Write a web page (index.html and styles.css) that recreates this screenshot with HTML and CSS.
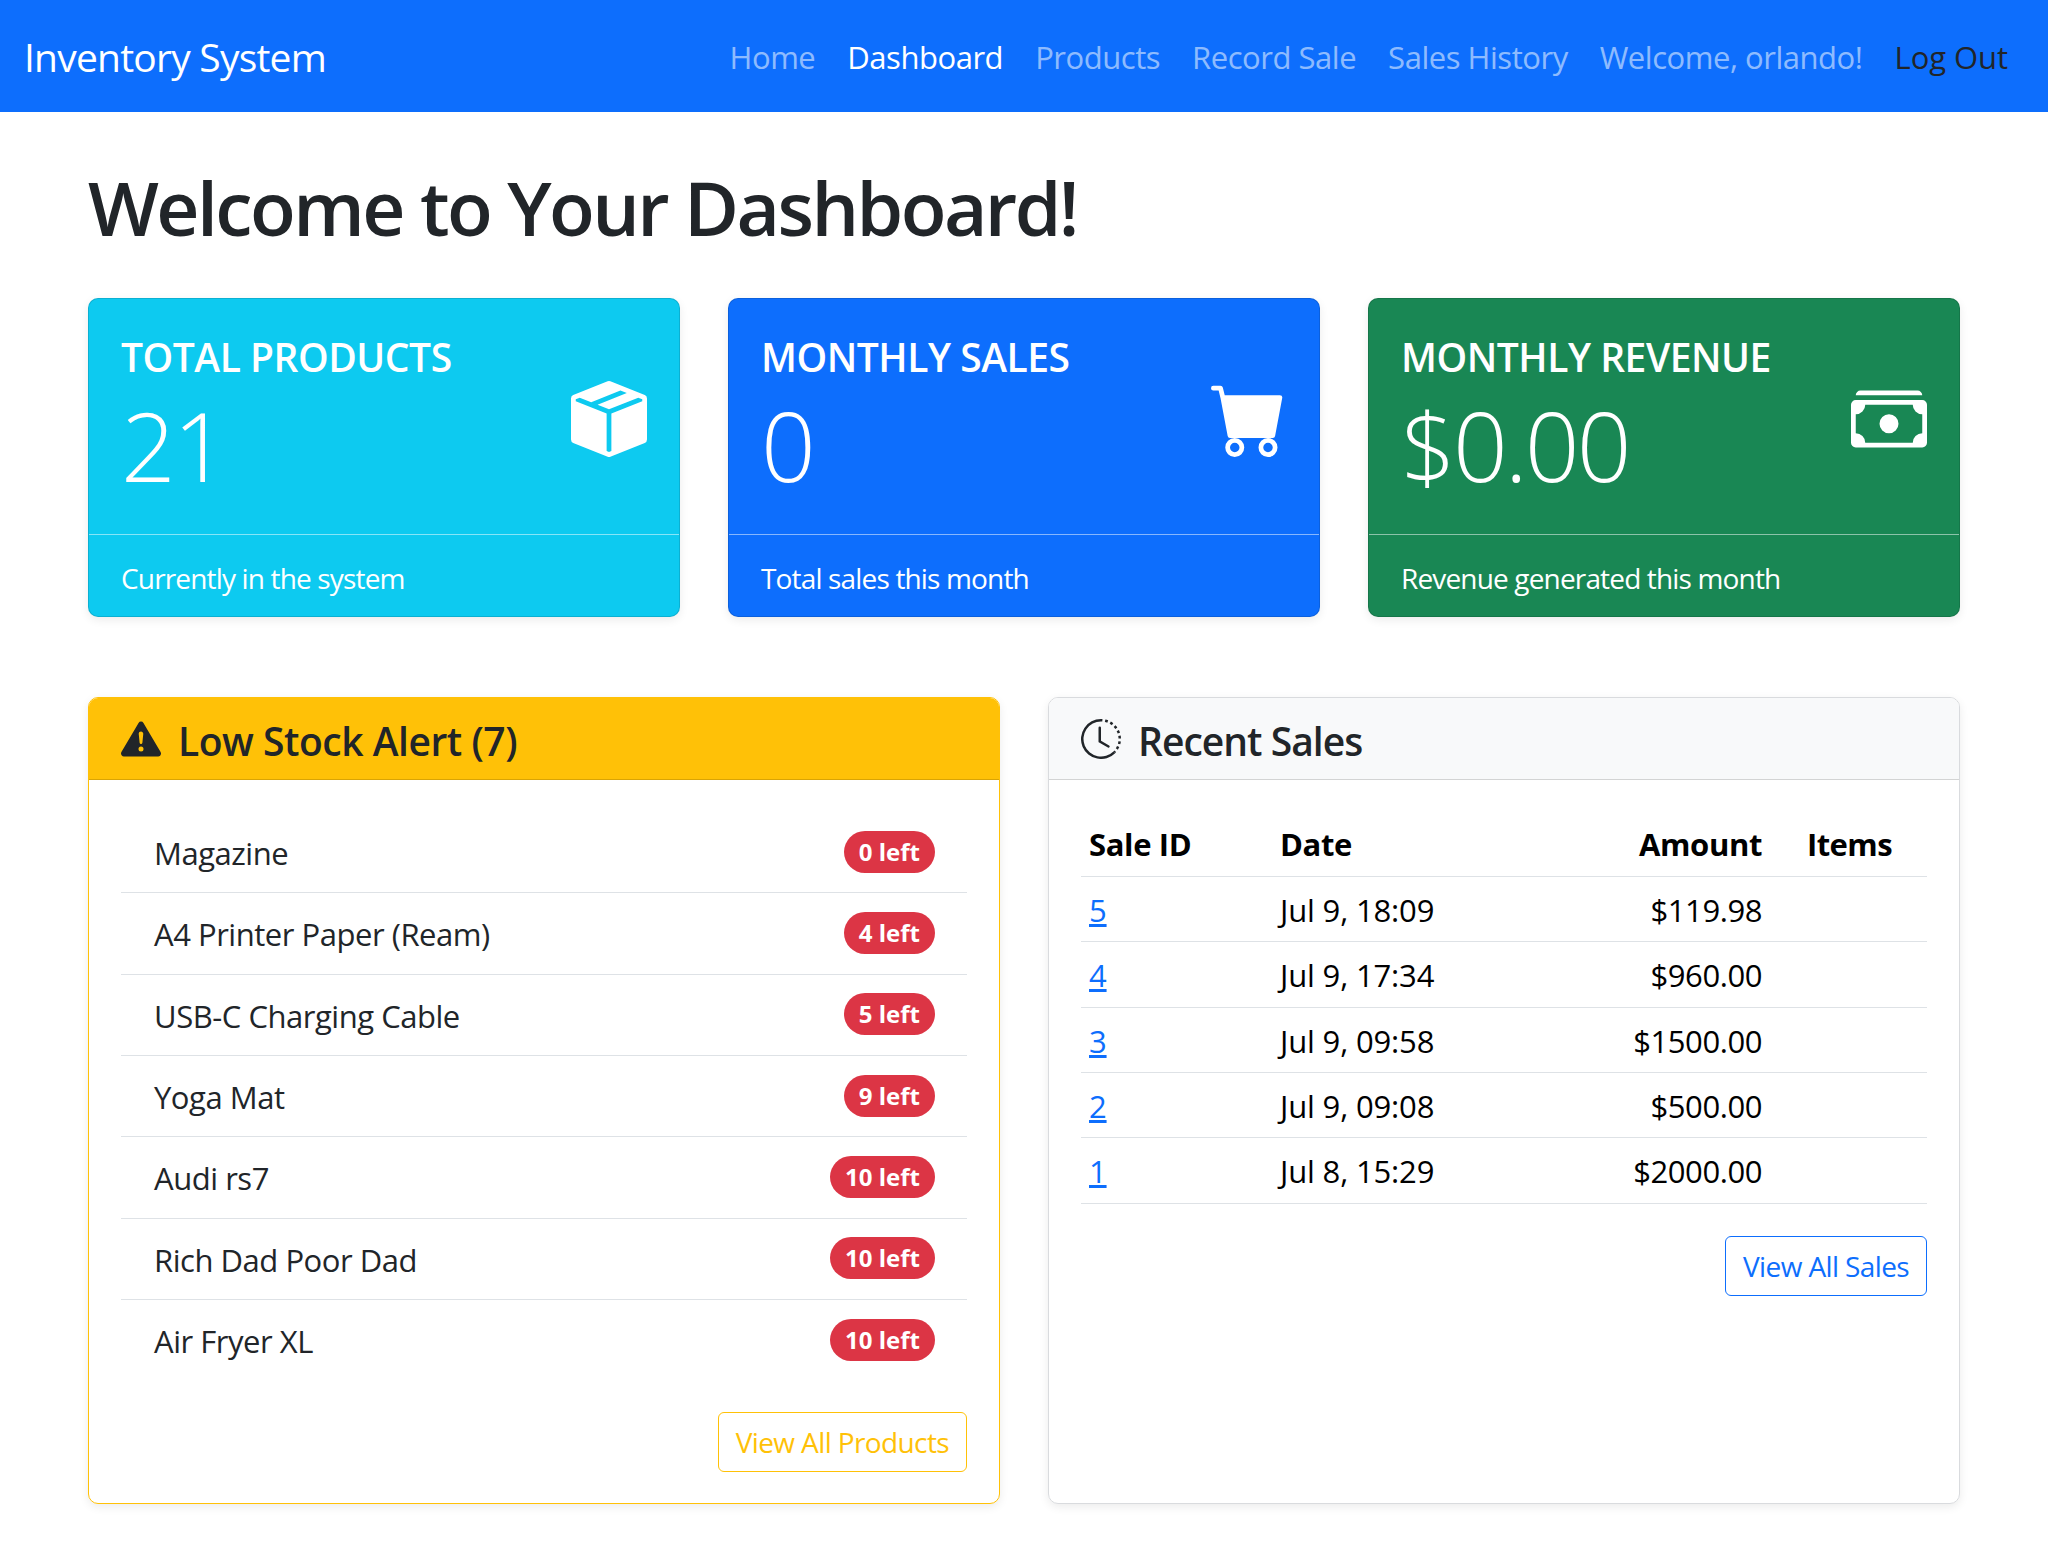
FILE: index.html
```html
<!DOCTYPE html>
<html lang="en">
<head>
<meta charset="utf-8">
<title>Dashboard - Inventory System</title>
<link rel="stylesheet" href="styles.css">
</head>
<body>
<nav class="navbar">
  <a class="brand" href="#">Inventory System</a>
  <ul class="nav">
    <li><a href="#">Home</a></li>
    <li><a class="active" href="#">Dashboard</a></li>
    <li><a href="#">Products</a></li>
    <li><a href="#">Record Sale</a></li>
    <li><a href="#">Sales History</a></li>
    <li><a href="#">Welcome, orlando!</a></li>
    <li><a class="logout" href="#">Log Out</a></li>
  </ul>
</nav>
<main class="container">
  <h1>Welcome to Your Dashboard!</h1>
  <section class="stats">
    <article class="stat stat-info">
      <div class="stat-body">
        <div>
          <h2 class="stat-title">TOTAL PRODUCTS</h2>
          <p class="stat-value">21</p>
        </div>
        <svg class="stat-icon" viewBox="0 0 16 16" fill="currentColor"><path d="M15.528 2.973a.75.75 0 0 1 .472.696v8.662a.75.75 0 0 1-.472.696l-7.25 2.9a.75.75 0 0 1-.557 0l-7.25-2.9A.75.75 0 0 1 0 12.331V3.669a.75.75 0 0 1 .471-.696L7.443.184l.01-.003.268-.108a.75.75 0 0 1 .558 0l.269.108.01.003zM10.404 2 4.25 4.461 1.846 3.5 1 3.839v.4l6.5 2.6v7.922l.5.2.5-.2V6.84l6.5-2.6v-.4l-.846-.339L8 5.961 5.596 5l6.154-2.461z"/></svg>
      </div>
      <div class="stat-foot">Currently in the system</div>
    </article>
    <article class="stat stat-primary">
      <div class="stat-body">
        <div>
          <h2 class="stat-title">MONTHLY SALES</h2>
          <p class="stat-value">0</p>
        </div>
        <svg class="stat-icon" viewBox="0 0 16 16" fill="currentColor"><path d="M0 1.5A.5.5 0 0 1 .5 1H2a.5.5 0 0 1 .485.379L2.89 3H14.5a.5.5 0 0 1 .491.592l-1.5 8A.5.5 0 0 1 13 12H4a.5.5 0 0 1-.491-.408L2.01 3.607 1.61 2H.5a.5.5 0 0 1-.5-.5M5 12a2 2 0 1 0 0 4 2 2 0 0 0 0-4m7 0a2 2 0 1 0 0 4 2 2 0 0 0 0-4m-7 1a1 1 0 1 1 0 2 1 1 0 0 1 0-2m7 0a1 1 0 1 1 0 2 1 1 0 0 1 0-2"/></svg>
      </div>
      <div class="stat-foot">Total sales this month</div>
    </article>
    <article class="stat stat-success">
      <div class="stat-body">
        <div>
          <h2 class="stat-title">MONTHLY REVENUE</h2>
          <p class="stat-value">$0.00</p>
        </div>
        <svg class="stat-icon" viewBox="0 0 16 16" fill="currentColor"><path d="M1 3a1 1 0 0 1 1-1h12a1 1 0 0 1 1 1zm7 8a2 2 0 1 0 0-4 2 2 0 0 0 0 4"/><path d="M0 5a1 1 0 0 1 1-1h14a1 1 0 0 1 1 1v8a1 1 0 0 1-1 1H1a1 1 0 0 1-1-1zm3 0a2 2 0 0 1-2 2v4a2 2 0 0 1 2 2h10a2 2 0 0 1 2-2V7a2 2 0 0 1-2-2z"/></svg>
      </div>
      <div class="stat-foot">Revenue generated this month</div>
    </article>
  </section>
  <section class="panels">
    <article class="panel panel-warning">
      <header class="panel-head head-warning">
        <svg class="head-icon" viewBox="0 0 16 16" fill="currentColor"><path d="M8.982 1.566a1.13 1.13 0 0 0-1.96 0L.165 13.233c-.457.778.091 1.767.98 1.767h13.713c.889 0 1.438-.99.98-1.767L8.982 1.566zM8 5c.535 0 .954.462.9.995l-.35 3.507a.552.552 0 0 1-1.1 0L7.1 5.995A.905.905 0 0 1 8 5zm.002 6a1 1 0 1 1 0 2 1 1 0 0 1 0-2z"/></svg>
        <h3 class="title-alert">Low Stock Alert (7)</h3>
      </header>
      <div class="panel-body">
        <ul class="stock">
          <li><span>Magazine</span><b class="badge">0 left</b></li>
          <li><span>A4 Printer Paper (Ream)</span><b class="badge">4 left</b></li>
          <li><span>USB-C Charging Cable</span><b class="badge">5 left</b></li>
          <li><span>Yoga Mat</span><b class="badge">9 left</b></li>
          <li><span>Audi rs7</span><b class="badge">10 left</b></li>
          <li><span>Rich Dad Poor Dad</span><b class="badge">10 left</b></li>
          <li><span>Air Fryer XL</span><b class="badge">10 left</b></li>
        </ul>
        <div class="actions actions-stock"><a class="btn btn-warning" href="#">View All Products</a></div>
      </div>
    </article>
    <article class="panel">
      <header class="panel-head head-light">
        <svg class="head-icon" viewBox="0 0 16 16" fill="currentColor"><path d="M8.515 1.019A7 7 0 0 0 8 1V0a8 8 0 0 1 .589.022zm2.004.45a7 7 0 0 0-.985-.299l.219-.976q.576.129 1.126.342zm1.37.71a7 7 0 0 0-.439-.27l.493-.87a8 8 0 0 1 .979.654l-.615.789a7 7 0 0 0-.418-.302zm1.834 1.79a7 7 0 0 0-.653-.796l.724-.69q.406.429.747.91zm.744 1.352a7 7 0 0 0-.214-.468l.893-.45a8 8 0 0 1 .45 1.088l-.95.313a7 7 0 0 0-.179-.483m.53 2.507a7 7 0 0 0-.1-1.025l.985-.17q.1.58.116 1.17zm-.131 1.538q.05-.254.081-.51l.993.123a8 8 0 0 1-.23 1.155l-.964-.267q.069-.247.12-.501m-.952 2.379q.276-.436.486-.908l.914.405q-.24.54-.555 1.038zm-.964 1.205q.183-.183.35-.378l.758.653a8 8 0 0 1-.401.432z"/><path d="M8 1a7 7 0 1 0 4.95 11.95l.707.707A8.001 8.001 0 1 1 8 0z"/><path d="M7.5 3a.5.5 0 0 1 .5.5v5.21l3.248 1.856a.5.5 0 0 1-.496.868l-3.5-2A.5.5 0 0 1 7 9V3.5a.5.5 0 0 1 .5-.5"/></svg>
        <h3 class="title-sales">Recent Sales</h3>
      </header>
      <div class="panel-body panel-body-table">
        <table class="sales">
          <thead>
            <tr><th class="c-id">Sale ID</th><th class="c-date">Date</th><th class="c-amt">Amount</th><th class="c-items">Items</th></tr>
          </thead>
          <tbody>
            <tr><td><a href="#">5</a></td><td>Jul 9, 18:09</td><td class="c-amt">$119.98</td><td></td></tr>
            <tr><td><a href="#">4</a></td><td>Jul 9, 17:34</td><td class="c-amt">$960.00</td><td></td></tr>
            <tr><td><a href="#">3</a></td><td>Jul 9, 09:58</td><td class="c-amt">$1500.00</td><td></td></tr>
            <tr><td><a href="#">2</a></td><td>Jul 9, 09:08</td><td class="c-amt">$500.00</td><td></td></tr>
            <tr><td><a href="#">1</a></td><td>Jul 8, 15:29</td><td class="c-amt">$2000.00</td><td></td></tr>
          </tbody>
        </table>
        <div class="actions"><a class="btn btn-primary" href="#">View All Sales</a></div>
      </div>
    </article>
  </section>
</main>
</body>
</html>
```
FILE: styles.css
```css
* { box-sizing: border-box; }
html, body { margin: 0; padding: 0; }
body {
  font-family: "Open Sans", "Liberation Sans", sans-serif;
  font-size: 31px;
  letter-spacing: -0.015em;
  line-height: 1.5;
  color: #212529;
  background: #fff;
}
a { text-decoration: none; }
ul { list-style: none; margin: 0; padding: 0; }
h1, h2, h3, p { margin: 0; }

.navbar {
  height: 112px;
  background: #0d6efd;
  display: flex;
  align-items: center;
  justify-content: space-between;
  padding: 2px 40px 0 24px;
}
.brand { color: #fff; font-size: 39px; letter-spacing: -0.02em; }
.nav { display: flex; gap: 32px; letter-spacing: -0.015em; }
.nav a { color: rgba(255,255,255,.55); }
.nav a.active { color: #fff; }
.nav a.logout { color: #212529; letter-spacing: -0.002em; }

.container { padding: 0 88px 47px; }
h1 { font-size: 75px; font-weight: 600; letter-spacing: -0.034em; line-height: 1.2; margin: 50px 0 46px; }

.stats { display: grid; grid-template-columns: repeat(3, 1fr); gap: 48px; margin-bottom: 80px; }
.stat {
  height: 319px;
  border-radius: 10px;
  color: #fff;
  display: flex;
  flex-direction: column;
  box-shadow: 0 3px 10px rgba(0,0,0,.08);
  border: 1px solid rgba(0,0,0,.125);
}
.stat-info { background: #0dcaf0; }
.stat-primary { background: #0d6efd; }
.stat-success { background: #198754; }
.stat-body { flex: 1; display: flex; justify-content: space-between; align-items: center; padding: 3px 32px 0 32px; }
.stat-title { font-size: 39px; font-weight: 600; letter-spacing: -0.012em; line-height: 1.2; margin-bottom: 7px; }
.stat-value { font-size: 96px; font-weight: 300; letter-spacing: -0.03em; line-height: 1.2; }
.stat-icon { width: 76px; height: 76px; flex: none; margin-top: 1px; }
.stat-foot { height: 82px; padding: 4px 32px 0; display: flex; align-items: center; border-top: 1px solid rgba(255,255,255,.5); font-size: 28px; letter-spacing: -0.03em; }

.panels { display: grid; grid-template-columns: 912px 912px; justify-content: space-between; }
.panel {
  height: 807px;
  border: 1px solid #d9dbde;
  border-radius: 10px;
  box-shadow: 0 3px 10px rgba(0,0,0,.08);
  display: flex;
  flex-direction: column;
  overflow: hidden;
}
.panel-warning { border-color: #ffc107; }
.panel-head { height: 82px; padding: 0 32px; display: flex; align-items: center; gap: 17px; border-bottom: 1px solid rgba(0,0,0,.15); flex: none; }
.head-warning { background: #ffc107; }
.head-light { background: #f8f9fa; }
.head-icon { width: 40px; height: 40px; flex: none; }
.panel-head h3 { font-size: 39px; font-weight: 600; line-height: 1.2; margin-top: 5px; }
.title-alert { letter-spacing: -0.012em; }
.title-sales { letter-spacing: -0.025em; }
.panel-body { padding: 32px; flex: 1; }
.panel-body-table { padding-top: 31px; }

.stock li { height: 81.35px; display: flex; align-items: center; justify-content: space-between; padding: 0 32px 0 33px; border-bottom: 1px solid #dee2e6; }
.stock li:last-child { border-bottom: 0; }
.stock li span { margin-top: 2px; }
.badge { background: #dc3545; color: #fff; font-size: 24px; font-weight: 700; line-height: 1; padding: 9px 15px; border-radius: 21px; letter-spacing: 0; margin-top: -1px; }

.actions { display: flex; justify-content: flex-end; margin-top: 32px; }
.actions-stock { margin-top: 31px; }
.btn { font-size: 28px; letter-spacing: -0.022em; line-height: 1.5; padding: 8px 17px; border: 1px solid; border-radius: 6px; }
.btn-warning { color: #ffc107; border-color: #ffc107; }
.btn-primary { color: #0d6efd; border-color: #0d6efd; }

.sales { width: 100%; table-layout: fixed; border-collapse: collapse; color: #000; letter-spacing: -0.005em; }
.sales th, .sales td { padding: 2px 8px 0; height: 65.4px; text-align: left; border-bottom: 1px solid #dee2e6; font-weight: 400; }
.sales th { font-weight: 700; letter-spacing: -0.012em; }
.sales td.c-amt { text-align: right; letter-spacing: -0.014em; }
.sales th.c-amt { text-align: right; }
.sales a { color: #0d6efd; text-decoration: underline; }
.c-id { width: 191px; }
.c-date { width: 295px; }
.c-amt { width: 203px; }
.sales .c-items { padding-left: 37px; letter-spacing: -0.018em; }
```
